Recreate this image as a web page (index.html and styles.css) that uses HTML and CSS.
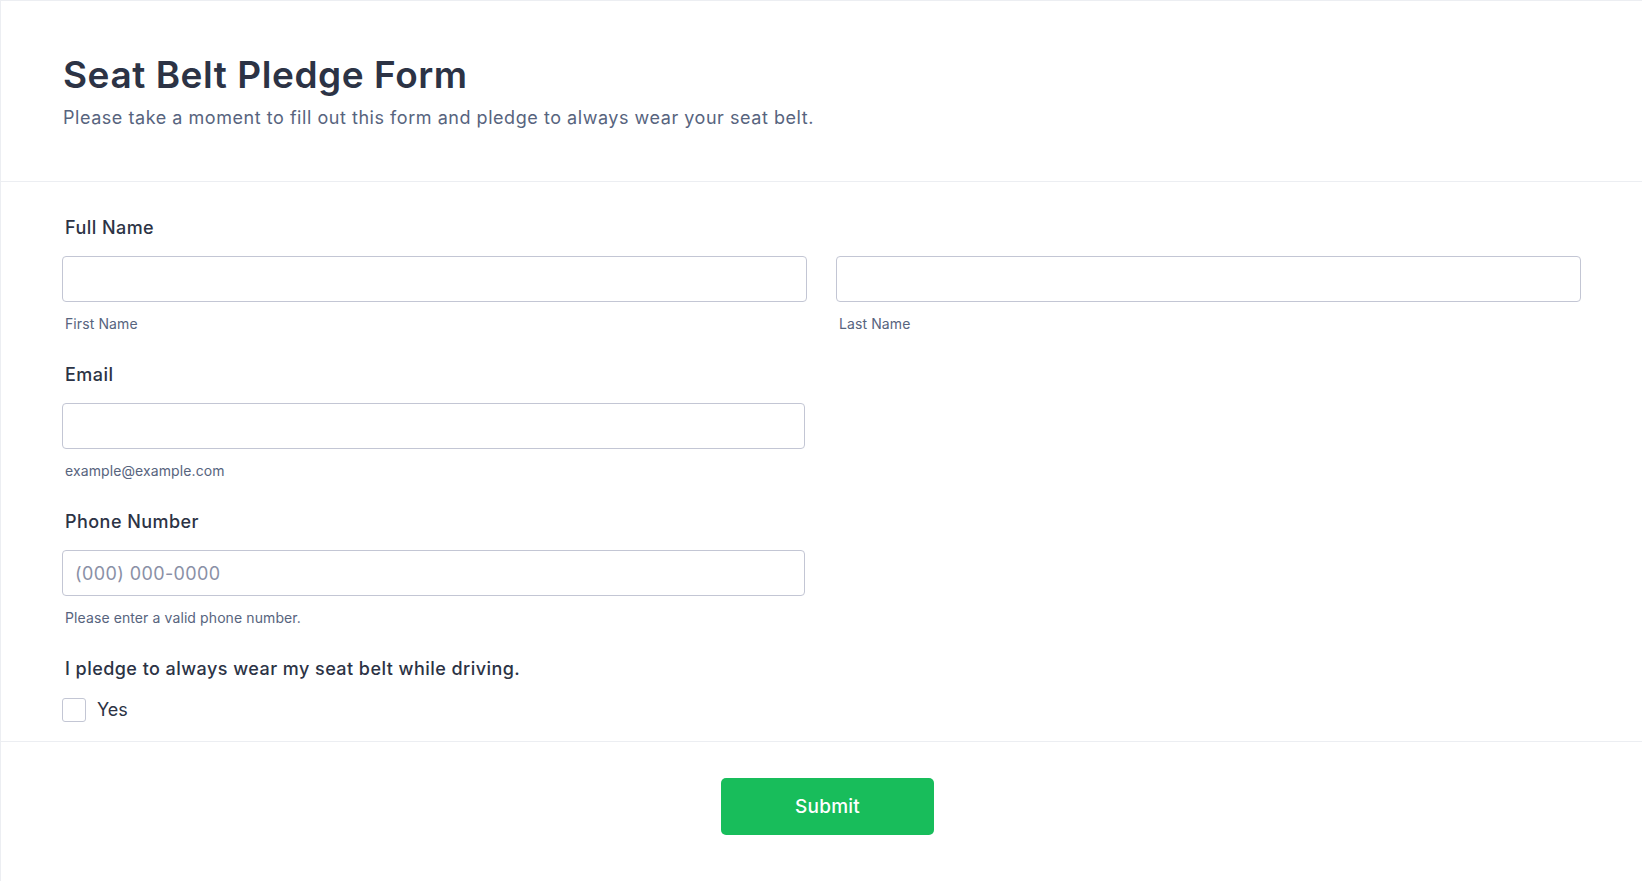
FILE: index.html
```html
<!DOCTYPE html>
<html lang="en">
<head>
<meta charset="utf-8">
<title>Seat Belt Pledge Form</title>
<link rel="stylesheet" href="styles.css">
</head>
<body>
<form class="form">
  <header class="form-header">
    <h1 class="form-title">Seat Belt Pledge Form</h1>
    <p class="form-subtitle">Please take a moment to fill out this form and pledge to always wear your seat belt.</p>
  </header>
  <section class="form-fields">
    <div class="field">
      <label class="field-label">Full Name</label>
      <div class="name-row">
        <div class="sub-field">
          <input class="text-input" type="text">
          <span class="sub-label">First Name</span>
        </div>
        <div class="sub-field">
          <input class="text-input" type="text">
          <span class="sub-label">Last Name</span>
        </div>
      </div>
    </div>
    <div class="field">
      <label class="field-label">Email</label>
      <div class="half">
        <input class="text-input" type="email">
        <span class="sub-label">example@example.com</span>
      </div>
    </div>
    <div class="field">
      <label class="field-label">Phone Number</label>
      <div class="half">
        <input class="text-input" type="tel" placeholder="(000) 000-0000">
        <span class="sub-label">Please enter a valid phone number.</span>
      </div>
    </div>
    <div class="field field-last">
      <label class="field-label pledge-label">I pledge to always wear my seat belt while driving.</label>
      <label class="check-row">
        <span class="checkbox"></span>
        <span class="check-text">Yes</span>
      </label>
    </div>
  </section>
  <footer class="form-footer">
    <button type="button" class="submit-btn">Submit</button>
  </footer>
</form>
</body>
</html>
```
FILE: styles.css
```css
* { box-sizing: border-box; }
html, body {
  margin: 0;
  padding: 0;
  background: #ffffff;
}
body {
  font-family: Inter, "Noto Sans", "Liberation Sans", sans-serif;
  color: #2c3345;
}
.form {
  border-top: 1px solid #eceef2;
  border-left: 1px solid #eceef2;
  min-height: 881px;
}
.form-header {
  padding: 52px 62px 51px 62px;
  border-bottom: 1px solid #eceef2;
}
.form-title {
  margin: 0;
  font-size: 37px;
  line-height: 44px;
  font-weight: 600;
  letter-spacing: 0.55px;
  color: #2c3345;
}
.form-subtitle {
  margin: 9px 0 0;
  font-size: 18px;
  line-height: 24px;
  letter-spacing: 0.54px;
  color: #57647e;
}
.form-fields {
  padding: 36px 61px 19px 61px;
  border-bottom: 1px solid #eceef2;
}
.field {
  margin-bottom: 32px;
}
.field-last {
  margin-bottom: 0;
}
.field-label {
  display: block;
  font-size: 18px;
  line-height: 20px;
  font-weight: 500;
  letter-spacing: 0.45px;
  color: #2c3345;
  margin-bottom: 18px;
  padding-left: 3px;
}
.name-row {
  display: grid;
  grid-template-columns: 1fr 1fr;
  gap: 29px;
}
.half {
  width: 743px;
}
.sub-field, .half {
  display: flex;
  flex-direction: column;
}
.text-input {
  display: block;
  width: 100%;
  height: 46px;
  border: 1px solid #c3c6d4;
  border-radius: 4px;
  background: #fff;
  padding: 0 12px;
  font-family: inherit;
  font-size: 18px;
  letter-spacing: 0.4px;
  color: #2c3345;
  outline: none;
}
.text-input::placeholder {
  color: #8a90a6;
}
.sub-label {
  display: block;
  margin-top: 13px;
  font-size: 14px;
  line-height: 18px;
  letter-spacing: 0.1px;
  color: #57647e;
  padding-left: 3px;
}
.pledge-label {
  margin-bottom: 19px;
}
.check-row {
  display: flex;
  align-items: center;
  gap: 11px;
}
.checkbox {
  width: 24px;
  height: 24px;
  border: 1px solid #c3c6d4;
  border-radius: 3px;
  background: #fff;
}
.check-text {
  font-size: 18px;
  line-height: 24px;
  color: #2c3345;
}
.form-footer {
  display: flex;
  justify-content: center;
  padding: 36px 0 36px 12px;
}
.submit-btn {
  width: 213px;
  height: 57px;
  border: none;
  border-radius: 5px;
  background: #18bd5b;
  color: #fff;
  font-family: inherit;
  font-size: 19px;
  font-weight: 500;
  letter-spacing: 0.2px;
  cursor: pointer;
}
```
